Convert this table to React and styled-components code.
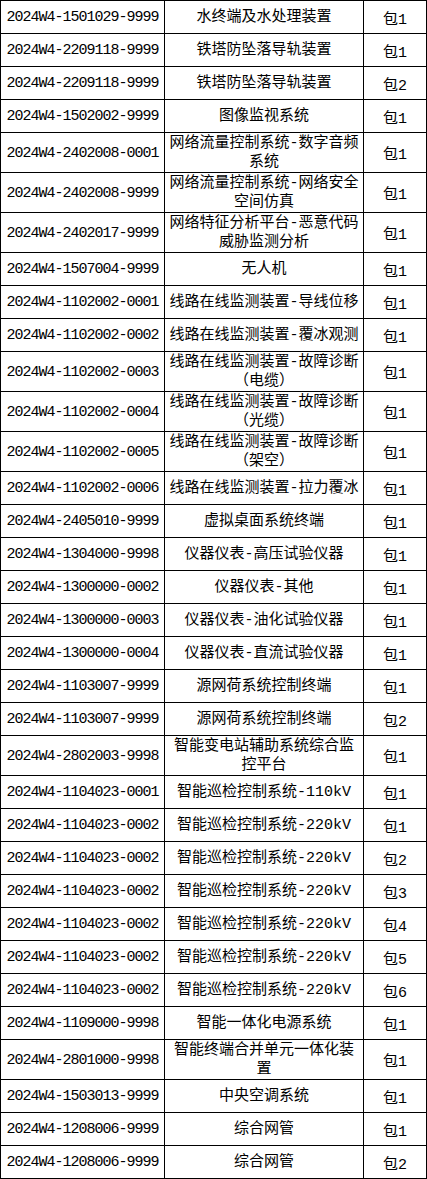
import React from "react";
import styled, { createGlobalStyle } from "styled-components";

const Global = createGlobalStyle`
  html, body { margin: 0; padding: 0; background: #ffffff; }
  body { width: 427px; }
`;

const Table = styled.div`
  display: flex;
  flex-direction: column;
  gap: 1px;
  width: 427px;
  box-sizing: border-box;
  padding: 1px;
  background: #000000;
`;

const Row = styled.div`
  display: grid;
  grid-template-columns: 163px 198px 62px;
  column-gap: 1px;
  height: ${(p) => (p.$tall ? 39 : 32)}px;
`;

const Cell = styled.div`
  background: #ffffff;
  color: #000000;
  display: flex;
  align-items: center;
  justify-content: center;
  text-align: center;
  box-sizing: border-box;
  overflow: hidden;
  padding-top: 1px;
  font-family: "Liberation Mono", "Noto Sans CJK SC", "DejaVu Sans Mono", monospace;
  font-size: 15px;
`;

const CodeCell = styled(Cell)`
  letter-spacing: -1px;
  white-space: nowrap;
`;

const NameCell = styled(Cell)`
  line-height: 19px;
  padding-left: 3px;
  padding-right: 3px;
`;

const PackCell = styled(Cell)``;

const rows = [
  ["2024W4-1501029-9999", "水终端及水处理装置", "包1"],
  ["2024W4-2209118-9999", "铁塔防坠落导轨装置", "包1"],
  ["2024W4-2209118-9999", "铁塔防坠落导轨装置", "包2"],
  ["2024W4-1502002-9999", "图像监视系统", "包1"],
  ["2024W4-2402008-0001", "网络流量控制系统-数字音频系统", "包1", true],
  ["2024W4-2402008-9999", "网络流量控制系统-网络安全空间仿真", "包1", true],
  ["2024W4-2402017-9999", "网络特征分析平台-恶意代码威胁监测分析", "包1", true],
  ["2024W4-1507004-9999", "无人机", "包1"],
  ["2024W4-1102002-0001", "线路在线监测装置-导线位移", "包1"],
  ["2024W4-1102002-0002", "线路在线监测装置-覆冰观测", "包1"],
  ["2024W4-1102002-0003", "线路在线监测装置-故障诊断（电缆）", "包1", true],
  ["2024W4-1102002-0004", "线路在线监测装置-故障诊断（光缆）", "包1", true],
  ["2024W4-1102002-0005", "线路在线监测装置-故障诊断（架空）", "包1", true],
  ["2024W4-1102002-0006", "线路在线监测装置-拉力覆冰", "包1"],
  ["2024W4-2405010-9999", "虚拟桌面系统终端", "包1"],
  ["2024W4-1304000-9998", "仪器仪表-高压试验仪器", "包1"],
  ["2024W4-1300000-0002", "仪器仪表-其他", "包1"],
  ["2024W4-1300000-0003", "仪器仪表-油化试验仪器", "包1"],
  ["2024W4-1300000-0004", "仪器仪表-直流试验仪器", "包1"],
  ["2024W4-1103007-9999", "源网荷系统控制终端", "包1"],
  ["2024W4-1103007-9999", "源网荷系统控制终端", "包2"],
  ["2024W4-2802003-9998", "智能变电站辅助系统综合监控平台", "包1", true],
  ["2024W4-1104023-0001", "智能巡检控制系统-110kV", "包1"],
  ["2024W4-1104023-0002", "智能巡检控制系统-220kV", "包1"],
  ["2024W4-1104023-0002", "智能巡检控制系统-220kV", "包2"],
  ["2024W4-1104023-0002", "智能巡检控制系统-220kV", "包3"],
  ["2024W4-1104023-0002", "智能巡检控制系统-220kV", "包4"],
  ["2024W4-1104023-0002", "智能巡检控制系统-220kV", "包5"],
  ["2024W4-1104023-0002", "智能巡检控制系统-220kV", "包6"],
  ["2024W4-1109000-9998", "智能一体化电源系统", "包1"],
  ["2024W4-2801000-9998", "智能终端合并单元一体化装置", "包1", true],
  ["2024W4-1503013-9999", "中央空调系统", "包1"],
  ["2024W4-1208006-9999", "综合网管", "包1"],
  ["2024W4-1208006-9999", "综合网管", "包2"],
];

export default function App() {
  return (
    <>
      <Global />
      <Table>
        {rows.map(([code, name, pack, tall], i) => (
          <Row key={i} $tall={tall}>
            <CodeCell>{code}</CodeCell>
            <NameCell>{name}</NameCell>
            <PackCell>{pack}</PackCell>
          </Row>
        ))}
      </Table>
    </>
  );
}
